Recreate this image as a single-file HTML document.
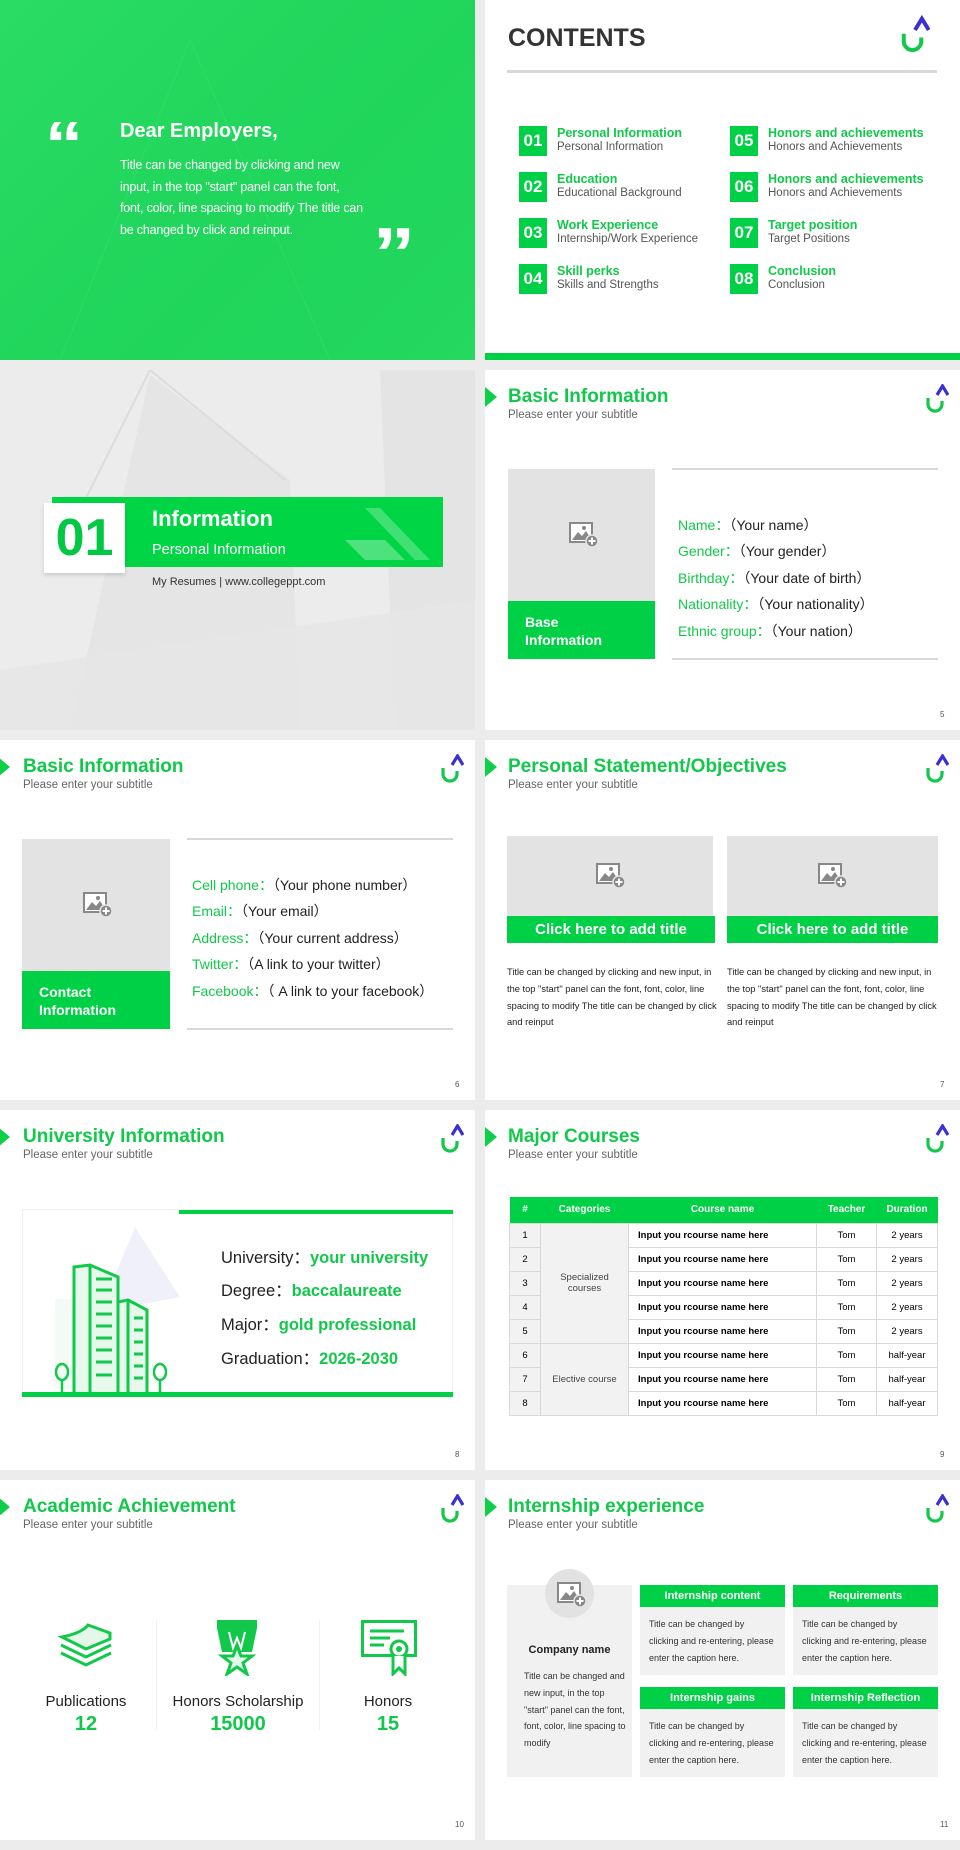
<!DOCTYPE html>
<html><head><meta charset="utf-8">
<style>
*{margin:0;padding:0;box-sizing:border-box}
body{width:960px;height:1850px;background:#ececec;font-family:"Liberation Sans",Arial,sans-serif;position:relative;overflow:hidden}
.s{position:absolute;width:475px;height:360px;background:#fff;overflow:hidden}
.a{position:absolute}
.tri{position:absolute;left:0;top:17px;width:0;height:0;border-left:12px solid #0fcf4a;border-top:10px solid transparent;border-bottom:10px solid transparent}
.ttl{position:absolute;left:23px;top:16px;font-size:19px;font-weight:bold;color:#12c84a;white-space:nowrap}
.sub{position:absolute;left:23px;top:39px;font-size:11.5px;color:#666;white-space:nowrap}
.logo{position:absolute;left:440px;top:14px}
.pn{position:absolute;left:455px;top:340px;font-size:8px;color:#555}
.g{color:#12c84a}
.ph{position:absolute;background:#e4e3e4}
.lbl{position:absolute;background:#00d045;color:#fff;font-weight:bold}
.row{position:absolute;font-size:14px;color:#222;white-space:nowrap}
.hl{position:absolute;height:2px;background:#d8d8d8}
table{border-collapse:collapse;font-size:9.5px}
td,th{text-align:center;height:24px;border:1px solid #d8d8d8;padding:0}
th{background:#00d045;color:#fff;height:26px;border:none;font-size:10px}
</style></head><body>

<svg width="0" height="0" style="position:absolute">
<defs>
<symbol id="lg" viewBox="0 0 24 30"><path d="M3 14 v6 a7 7 0 0 0 14 0 v-3" fill="none" stroke="#12c84a" stroke-width="3.2"/><path d="M12 11 L17.5 2 L23 11" fill="none" stroke="#3a2fd0" stroke-width="3.2"/></symbol>
<symbol id="im" viewBox="0 0 30 26"><rect x="1" y="1" width="22" height="19" fill="#fff" stroke="#888" stroke-width="2"/><path d="M3 18 L9 10 L13 14 L17 9 L21 15 V18 Z" fill="#888"/><circle cx="15" cy="6" r="2" fill="#888"/><circle cx="23" cy="19" r="6" fill="#888" stroke="#e4e3e4" stroke-width="1.5"/><path d="M23 15.5 v7 M19.5 19 h7" stroke="#fff" stroke-width="2"/></symbol>
</defs></svg>

<!-- Slide 1 -->
<div class="s" style="left:0;top:0;background:linear-gradient(135deg,#2adb64,#1fd55a 60%,#24d860)">
  <svg class="a" style="left:0;top:0" width="475" height="360"><path d="M60 360 L190 40 L330 360" fill="none" stroke="#3ee277" stroke-width="1.5" opacity=".3"/></svg>
  <div class="a" style="left:48px;top:112px;font-size:64px;font-weight:bold;color:#fff;line-height:64px;font-family:'Liberation Sans',sans-serif;transform:scaleX(1.2)">“</div>
  <div class="a" style="left:120px;top:120px;font-size:20px;font-weight:bold;color:#fff">Dear Employers,</div>
  <div class="a" style="left:120px;top:155px;width:245px;font-size:12.5px;line-height:21.7px;color:#fff;letter-spacing:-0.2px">Title can be changed by clicking and new input, in the top "start" panel can the font, font, color, line spacing to modify The title can be changed by click and reinput.</div>
  <div class="a" style="left:376px;top:218px;font-size:72px;font-weight:bold;color:#fff;line-height:72px;font-family:'Liberation Sans',sans-serif;transform:scaleX(1.2)">”</div>
</div>

<!-- Slide 2 CONTENTS -->
<div class="s" style="left:485px;top:0">
  <div class="a" style="left:23px;top:24px;font-size:25px;font-weight:bold;color:#333">CONTENTS</div>
  <svg class="logo" style="left:415px;top:14px" width="30" height="42"><use href="#lg"/></svg>
  <div class="hl" style="left:22px;top:70px;width:430px;height:3px"></div>
  <div class="a" style="left:0;top:353px;width:475px;height:7px;background:#00d045"></div>
  <div class="a" style="left:34px;top:126px;width:28px;height:30px;background:#00d045;color:#fff;font-size:17px;font-weight:bold;text-align:center;line-height:30px">01</div>
  <div class="a" style="left:72px;top:127px;font-size:12.5px;line-height:13px"><b class="g">Personal Information</b><br><span style="color:#555;font-size:11.5px">Personal Information</span></div>
  <div class="a" style="left:34px;top:172px;width:28px;height:30px;background:#00d045;color:#fff;font-size:17px;font-weight:bold;text-align:center;line-height:30px">02</div>
  <div class="a" style="left:72px;top:173px;font-size:12.5px;line-height:13px"><b class="g">Education</b><br><span style="color:#555;font-size:11.5px">Educational Background</span></div>
  <div class="a" style="left:34px;top:218px;width:28px;height:30px;background:#00d045;color:#fff;font-size:17px;font-weight:bold;text-align:center;line-height:30px">03</div>
  <div class="a" style="left:72px;top:219px;font-size:12.5px;line-height:13px"><b class="g">Work Experience</b><br><span style="color:#555;font-size:11.5px">Internship/Work Experience</span></div>
  <div class="a" style="left:34px;top:264px;width:28px;height:30px;background:#00d045;color:#fff;font-size:17px;font-weight:bold;text-align:center;line-height:30px">04</div>
  <div class="a" style="left:72px;top:265px;font-size:12.5px;line-height:13px"><b class="g">Skill perks</b><br><span style="color:#555;font-size:11.5px">Skills and Strengths</span></div>
  <div class="a" style="left:245px;top:126px;width:28px;height:30px;background:#00d045;color:#fff;font-size:17px;font-weight:bold;text-align:center;line-height:30px">05</div>
  <div class="a" style="left:283px;top:127px;font-size:12.5px;line-height:13px;white-space:nowrap"><b class="g">Honors and achievements</b><br><span style="color:#555;font-size:11.5px">Honors and Achievements</span></div>
  <div class="a" style="left:245px;top:172px;width:28px;height:30px;background:#00d045;color:#fff;font-size:17px;font-weight:bold;text-align:center;line-height:30px">06</div>
  <div class="a" style="left:283px;top:173px;font-size:12.5px;line-height:13px;white-space:nowrap"><b class="g">Honors and achievements</b><br><span style="color:#555;font-size:11.5px">Honors and Achievements</span></div>
  <div class="a" style="left:245px;top:218px;width:28px;height:30px;background:#00d045;color:#fff;font-size:17px;font-weight:bold;text-align:center;line-height:30px">07</div>
  <div class="a" style="left:283px;top:219px;font-size:12.5px;line-height:13px"><b class="g">Target position</b><br><span style="color:#555;font-size:11.5px">Target Positions</span></div>
  <div class="a" style="left:245px;top:264px;width:28px;height:30px;background:#00d045;color:#fff;font-size:17px;font-weight:bold;text-align:center;line-height:30px">08</div>
  <div class="a" style="left:283px;top:265px;font-size:12.5px;line-height:13px"><b class="g">Conclusion</b><br><span style="color:#555;font-size:11.5px">Conclusion</span></div>
</div>

<!-- Slide 3 -->
<div class="s" style="left:0;top:370px;background:#ececec">
  <svg class="a" style="left:0;top:0" width="475" height="360"><path d="M70 360 L150 5 L290 110 L300 360Z" fill="#e5e5e5"/><path d="M80 140 L150 0 L285 110" fill="none" stroke="#dcdcdc" stroke-width="2"/><path d="M380 0 H475 V360 H395 Z" fill="#e4e4e4"/><path d="M0 300 L475 230 V360 H0Z" fill="#e6e6e6" opacity=".8"/></svg>
  <div class="a" style="left:52px;top:127px;width:391px;height:70px;background:#00d645"></div>
  <svg class="a" style="left:340px;top:130px" width="100" height="66"><path d="M25 8 L40 8 L90 60 L75 60Z" fill="#fff" opacity=".25"/><path d="M5 40 L45 40 L65 60 L25 60Z" fill="#fff" opacity=".3"/></svg>
  <div class="a" style="left:44px;top:133px;width:81px;height:70px;background:#fff;box-shadow:0 2px 4px rgba(0,0,0,.15);color:#00c844;font-size:52px;font-weight:bold;text-align:center;line-height:70px">01</div>
  <div class="a" style="left:152px;top:136px;font-size:22px;font-weight:bold;color:#fff">Information</div>
  <div class="a" style="left:152px;top:172px;font-size:14.5px;color:#fff">Personal Information</div>
  <div class="a" style="left:152px;top:206px;font-size:11px;color:#333">My Resumes | www.collegeppt.com</div>
</div>

<!-- Slide 4 -->
<div class="s" style="left:485px;top:370px">
  <div class="tri"></div><div class="ttl">Basic Information</div><div class="sub">Please enter your subtitle</div>
  <svg class="logo" width="24" height="30"><use href="#lg"/></svg>
  <div class="ph" style="left:23px;top:99px;width:147px;height:132px"></div>
  <svg class="a" style="left:84px;top:152px" width="30" height="26"><use href="#im"/></svg>
  <div class="lbl" style="left:23px;top:231px;width:147px;height:58px;padding:12px 17px;font-size:14px;line-height:18px">Base<br>Information</div>
  <div class="hl" style="left:187px;top:98px;width:266px"></div>
  <div class="hl" style="left:187px;top:288px;width:266px"></div>
  <div class="row" style="left:193px;top:145px"><span class="g">Name：</span>（Your name）</div>
  <div class="row" style="left:193px;top:171px"><span class="g">Gender：</span>（Your gender）</div>
  <div class="row" style="left:193px;top:198px"><span class="g">Birthday：</span>（Your date of birth）</div>
  <div class="row" style="left:193px;top:224px"><span class="g">Nationality：</span>（Your nationality）</div>
  <div class="row" style="left:193px;top:251px"><span class="g">Ethnic group：</span>（Your nation）</div>
  <div class="pn">5</div>
</div>

<!-- Slide 5 -->
<div class="s" style="left:0;top:740px">
  <div class="tri" style="left:-2px"></div><div class="ttl">Basic Information</div><div class="sub">Please enter your subtitle</div>
  <svg class="logo" width="24" height="30"><use href="#lg"/></svg>
  <div class="ph" style="left:22px;top:99px;width:148px;height:132px"></div>
  <svg class="a" style="left:83px;top:152px" width="30" height="26"><use href="#im"/></svg>
  <div class="lbl" style="left:22px;top:231px;width:148px;height:58px;padding:12px 17px;font-size:14px;line-height:18px">Contact<br>Information</div>
  <div class="hl" style="left:187px;top:98px;width:266px"></div>
  <div class="hl" style="left:187px;top:288px;width:266px"></div>
  <div class="row" style="left:192px;top:135px"><span class="g">Cell phone：</span>（Your phone number）</div>
  <div class="row" style="left:192px;top:161px"><span class="g">Email：</span>（Your email）</div>
  <div class="row" style="left:192px;top:188px"><span class="g">Address：</span>（Your current address）</div>
  <div class="row" style="left:192px;top:214px"><span class="g">Twitter：</span>（A link to your twitter）</div>
  <div class="row" style="left:192px;top:241px"><span class="g">Facebook：</span>（ A link to your facebook）</div>
  <div class="pn">6</div>
</div>

<!-- Slide 6 -->
<div class="s" style="left:485px;top:740px">
  <div class="tri"></div><div class="ttl">Personal Statement/Objectives</div><div class="sub">Please enter your subtitle</div>
  <svg class="logo" width="24" height="30"><use href="#lg"/></svg>
  <div class="ph" style="left:22px;top:96px;width:206px;height:80px"></div>
  <div class="ph" style="left:242px;top:96px;width:211px;height:80px"></div>
  <svg class="a" style="left:111px;top:123px" width="30" height="26"><use href="#im"/></svg>
  <svg class="a" style="left:333px;top:123px" width="30" height="26"><use href="#im"/></svg>
  <div class="lbl" style="left:22px;top:176px;width:208px;height:27px;text-align:center;font-size:15px;line-height:27px">Click here to add title</div>
  <div class="lbl" style="left:242px;top:176px;width:211px;height:27px;text-align:center;font-size:15px;line-height:27px">Click here to add title</div>
  <div class="a" style="left:22px;top:224px;width:210px;font-size:9.3px;line-height:16.8px;color:#222">Title can be changed by clicking and new input, in the top "start" panel can the font, font, color, line spacing to modify The title can be changed by click and reinput</div>
  <div class="a" style="left:242px;top:224px;width:214px;font-size:9.3px;line-height:16.8px;color:#222">Title can be changed by clicking and new input, in the top "start" panel can the font, font, color, line spacing to modify The title can be changed by click and reinput</div>
  <div class="pn">7</div>
</div>

<!-- Slide 7 -->
<div class="s" style="left:0;top:1110px">
  <div class="tri" style="left:-2px"></div><div class="ttl">University Information</div><div class="sub">Please enter your subtitle</div>
  <svg class="logo" width="24" height="30"><use href="#lg"/></svg>
  <div class="a" style="left:22px;top:99px;width:431px;height:188px;border:1px solid #eee"></div>
  <div class="a" style="left:179px;top:100px;width:274px;height:4px;background:#00d045"></div>
  <div class="a" style="left:22px;top:282px;width:431px;height:5px;background:#00d045"></div>
  <svg class="a" style="left:50px;top:112px" width="140" height="172">
    <path d="M50 90 L85 5 L130 75" fill="#f0f0fa"/>
    <rect x="5" y="77" width="40" height="90" fill="#f4faf5"/>
    <path d="M24 170 V45 L40 43 L68 55 V170" fill="#e6f9ec" stroke="#12c84a" stroke-width="3"/>
    <path d="M40 43 V170" stroke="#12c84a" stroke-width="3"/>
    <path d="M68 170 V80 L78 78 L97 88 V170" fill="#e6f9ec" stroke="#12c84a" stroke-width="3"/>
    <path d="M78 78 V170" stroke="#12c84a" stroke-width="3"/>
    <g stroke="#12c84a" stroke-width="3"><path d="M46 57h16M46 68h16M46 80h16M46 92h16M46 104h16M46 116h16M46 128h16M46 140h16M46 153h16M84 96h9M84 108h9M84 120h9M84 132h9M84 144h9M84 156h9"/></g>
    <g fill="none" stroke="#12c84a" stroke-width="2.5"><ellipse cx="12" cy="150" rx="6" ry="8"/><path d="M12 158v12"/><ellipse cx="110" cy="150" rx="6" ry="8"/><path d="M110 158v12"/></g>
  </svg>
  <div class="row" style="left:221px;top:134px;font-size:16.5px">University：<b class="g">your university</b></div>
  <div class="row" style="left:221px;top:167px;font-size:16.5px">Degree：<b class="g">baccalaureate</b></div>
  <div class="row" style="left:221px;top:201px;font-size:16.5px">Major：<b class="g">gold professional</b></div>
  <div class="row" style="left:221px;top:235px;font-size:16.5px">Graduation：<b class="g">2026-2030</b></div>
  <div class="pn">8</div>
</div>

<!-- Slide 8 -->
<div class="s" style="left:485px;top:1110px">
  <div class="tri"></div><div class="ttl">Major Courses</div><div class="sub">Please enter your subtitle</div>
  <svg class="logo" width="24" height="30"><use href="#lg"/></svg>
  <table class="a" style="left:24px;top:87px;width:429px">
    <tr><th style="width:31px">#</th><th style="width:88px">Categories</th><th style="width:188px">Course name</th><th style="width:60px">Teacher</th><th>Duration</th></tr>
    <tr><td style="background:#f2f2f2">1</td><td rowspan="5" style="background:#f2f2f2;color:#444">Specialized<br>courses</td><td style="text-align:left;padding-left:9px;font-weight:bold">Input you rcourse name here</td><td>Tom</td><td>2 years</td></tr>
    <tr><td style="background:#f2f2f2">2</td><td style="text-align:left;padding-left:9px;font-weight:bold">Input you rcourse name here</td><td>Tom</td><td>2 years</td></tr>
    <tr><td style="background:#f2f2f2">3</td><td style="text-align:left;padding-left:9px;font-weight:bold">Input you rcourse name here</td><td>Tom</td><td>2 years</td></tr>
    <tr><td style="background:#f2f2f2">4</td><td style="text-align:left;padding-left:9px;font-weight:bold">Input you rcourse name here</td><td>Tom</td><td>2 years</td></tr>
    <tr><td style="background:#f2f2f2">5</td><td style="text-align:left;padding-left:9px;font-weight:bold">Input you rcourse name here</td><td>Tom</td><td>2 years</td></tr>
    <tr><td style="background:#f2f2f2">6</td><td rowspan="3" style="background:#f2f2f2;color:#444">Elective course</td><td style="text-align:left;padding-left:9px;font-weight:bold">Input you rcourse name here</td><td>Tom</td><td>half-year</td></tr>
    <tr><td style="background:#f2f2f2">7</td><td style="text-align:left;padding-left:9px;font-weight:bold">Input you rcourse name here</td><td>Tom</td><td>half-year</td></tr>
    <tr><td style="background:#f2f2f2">8</td><td style="text-align:left;padding-left:9px;font-weight:bold">Input you rcourse name here</td><td>Tom</td><td>half-year</td></tr>
  </table>
  <div class="pn">9</div>
</div>

<!-- Slide 9 -->
<div class="s" style="left:0;top:1480px">
  <div class="tri" style="left:-2px"></div><div class="ttl">Academic Achievement</div><div class="sub">Please enter your subtitle</div>
  <svg class="logo" width="24" height="30"><use href="#lg"/></svg>
  <div class="a" style="left:156px;top:140px;width:1px;height:110px;background:#f0f0f0"></div>
  <div class="a" style="left:319px;top:140px;width:1px;height:110px;background:#f0f0f0"></div>
  <svg class="a" style="left:58px;top:143px" width="56" height="48"><path d="M3 22 L28 34 L53 22" fill="none" stroke="#12c84a" stroke-width="3"/><path d="M3 30 L28 42 L53 30" fill="none" stroke="#12c84a" stroke-width="3"/><path d="M4 14 L28 26 L52 16 V10 L30 2 Q24 10 4 14Z" fill="#e3f8e9" stroke="#12c84a" stroke-width="3"/></svg>
  <svg class="a" style="left:216px;top:140px" width="42" height="56"><rect x="1" y="0" width="40" height="8" fill="#12c84a"/><path d="M1 8 H41 L36 32 H6Z" fill="#12c84a"/><path d="M13 12 L17 28 L21 18 L25 28 L29 12" fill="none" stroke="#fff" stroke-width="2"/><path d="M21 26 L25 36 L36 36 L27 43 L31 54 L21 47 L11 54 L15 43 L6 36 L17 36Z" fill="#e3f8e9" stroke="#12c84a" stroke-width="3"/></svg>
  <svg class="a" style="left:361px;top:140px" width="56" height="56"><rect x="1.5" y="1.5" width="53" height="34" fill="none" stroke="#12c84a" stroke-width="3"/><path d="M9 11h34M9 18h20M9 25h14" stroke="#12c84a" stroke-width="3"/><circle cx="38" cy="29" r="8" fill="#fff" stroke="#12c84a" stroke-width="3"/><circle cx="38" cy="29" r="3" fill="#12c84a"/><path d="M32 36 V54 L38 48 L44 54 V36" fill="#fff" stroke="#12c84a" stroke-width="3"/></svg>
  <div class="a" style="left:6px;top:213px;width:160px;text-align:center;font-size:15px;color:#222">Publications</div>
  <div class="a" style="left:6px;top:233px;width:160px;text-align:center;font-size:20px;font-weight:bold;color:#12c84a">12</div>
  <div class="a" style="left:157px;top:213px;width:162px;text-align:center;font-size:15px;color:#222">Honors Scholarship</div>
  <div class="a" style="left:157px;top:233px;width:162px;text-align:center;font-size:20px;font-weight:bold;color:#12c84a">15000</div>
  <div class="a" style="left:308px;top:213px;width:160px;text-align:center;font-size:15px;color:#222">Honors</div>
  <div class="a" style="left:308px;top:233px;width:160px;text-align:center;font-size:20px;font-weight:bold;color:#12c84a">15</div>
  <div class="pn">10</div>
</div>

<!-- Slide 10 -->
<div class="s" style="left:485px;top:1480px">
  <div class="tri"></div><div class="ttl">Internship experience</div><div class="sub">Please enter your subtitle</div>
  <svg class="logo" width="24" height="30"><use href="#lg"/></svg>
  <div class="a" style="left:22px;top:105px;width:125px;height:192px;background:#f1f1f1"></div>
  <div class="a" style="left:60px;top:89px;width:49px;height:49px;border-radius:50%;background:#e2e2e2"></div>
  <svg class="a" style="left:72px;top:102px" width="30" height="26"><use href="#im"/></svg>
  <div class="a" style="left:22px;top:164px;width:125px;text-align:center;font-size:11px;font-weight:bold;color:#222">Company name</div>
  <div class="a" style="left:39px;top:188px;width:105px;font-size:9px;line-height:16.8px;color:#333">Title can be changed and new input, in the top "start" panel can the font, font, color, line spacing to modify</div>
  <div class="a" style="left:155px;top:105px;width:145px;height:90px;background:#f1f1f1"></div>
  <div class="a" style="left:308px;top:105px;width:145px;height:90px;background:#f1f1f1"></div>
  <div class="a" style="left:155px;top:207px;width:145px;height:90px;background:#f1f1f1"></div>
  <div class="a" style="left:308px;top:207px;width:145px;height:90px;background:#f1f1f1"></div>
  <div class="lbl" style="left:155px;top:105px;width:145px;height:22px;text-align:center;font-size:11px;line-height:22px">Internship content</div>
  <div class="lbl" style="left:308px;top:105px;width:145px;height:22px;text-align:center;font-size:11px;line-height:22px">Requirements</div>
  <div class="lbl" style="left:155px;top:207px;width:145px;height:22px;text-align:center;font-size:11px;line-height:22px">Internship gains</div>
  <div class="lbl" style="left:308px;top:207px;width:145px;height:22px;text-align:center;font-size:11px;line-height:22px">Internship Reflection</div>
  <div class="a" style="left:164px;top:136px;width:125px;font-size:9px;line-height:16.8px;color:#333">Title can be changed by clicking and re-entering, please enter the caption here.</div>
  <div class="a" style="left:317px;top:136px;width:125px;font-size:9px;line-height:16.8px;color:#333">Title can be changed by clicking and re-entering, please enter the caption here.</div>
  <div class="a" style="left:164px;top:238px;width:125px;font-size:9px;line-height:16.8px;color:#333">Title can be changed by clicking and re-entering, please enter the caption here.</div>
  <div class="a" style="left:317px;top:238px;width:125px;font-size:9px;line-height:16.8px;color:#333">Title can be changed by clicking and re-entering, please enter the caption here.</div>
  <div class="pn">11</div>
</div>
</body></html>
